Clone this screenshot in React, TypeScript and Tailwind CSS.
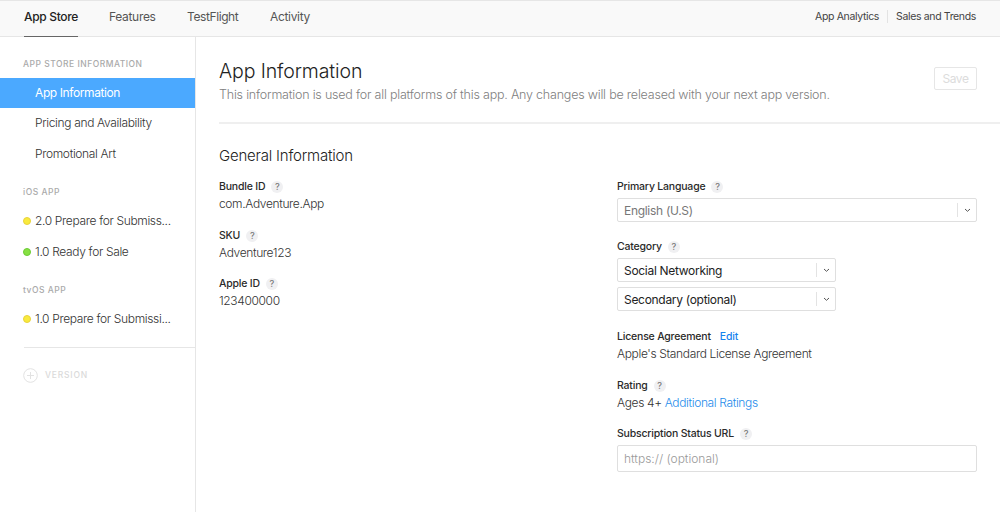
import type { ReactNode } from "react";

export default function App() {
  return (
    <div className="flex h-[512px] w-[1000px] flex-col overflow-hidden bg-white font-['Inter','Liberation_Sans',sans-serif] text-[#444]">
      <header className="flex h-[37px] shrink-0 justify-between border-t border-b border-[#e6e6e6] bg-[#f9f9f9] pr-6 pl-6">
        <nav className="flex text-[12px] leading-[32px] tracking-[-0.32px] text-[#555]">
          <a className="mr-[31px] h-[36px] w-[54px] border-b border-[#666] font-medium whitespace-nowrap text-[#222]">
            App Store
          </a>
          <a className="w-[78px]">Features</a>
          <a className="w-[83px] tracking-[-0.4px]">TestFlight</a>
          <a>Activity</a>
        </nav>
        <div className="flex h-[31px] items-center text-[10.5px] tracking-[-0.35px] text-[#444]">
          <a>App Analytics</a>
          <span className="mr-[8px] ml-[8px] h-[13px] w-px bg-[#e3e3e3]" />
          <a>Sales and Trends</a>
        </div>
      </header>

      <div className="flex min-h-0 flex-1">
        <aside className="w-[196px] shrink-0 border-r border-[#e6e6e6] pt-[19px]">
          <SectionTitle>APP STORE INFORMATION</SectionTitle>
          <div className="mt-[5px]">
            <div className="h-[30px] bg-[#4ba9ff] pl-[35px] text-[12px] leading-[30px] tracking-[-0.4px] text-white">
              App Information
            </div>
            <NavItem>Pricing and Availability</NavItem>
            <NavItem>Promotional Art</NavItem>
          </div>

          <div className="mt-[15px]">
            <SectionTitle>iOS APP</SectionTitle>
          </div>
          <div className="mt-[5px]">
            <NavItem dot="yellow">2.0 Prepare for Submiss...</NavItem>
            <NavItem dot="green">1.0 Ready for Sale</NavItem>
          </div>

          <div className="mt-[15px]">
            <SectionTitle>tvOS APP</SectionTitle>
          </div>
          <div className="mt-[5px]">
            <NavItem dot="yellow">1.0 Prepare for Submissi...</NavItem>
          </div>

          <div className="mt-[12px] ml-6 flex items-center border-t border-[#e6e6e6] pt-[20px]">
            <svg
              className="-ml-px"
              width="15"
              height="15"
              viewBox="0 0 15 15"
              fill="none"
              stroke="#e2e2e2"
            >
              <circle cx="7.5" cy="7.5" r="6.8" />
              <path d="M7.5 4v7M4 7.5h7" />
            </svg>
            <span className="ml-[7px] text-[8.5px] font-medium tracking-[0.8px] text-[#dadada]">
              VERSION
            </span>
          </div>
        </aside>

        <main className="flex-1 pl-[23px]">
          <div className="flex h-[87px] justify-between border-b-2 border-[#efefef] pr-[23px]">
            <div className="pt-[20px]">
              <h1 className="text-[19.5px] leading-[28px] font-light tracking-[-0.1px] text-[#222]">
                App Information
              </h1>
              <p className="text-[12.5px] leading-[19px] font-light tracking-[-0.21px] text-[#808080]">
                This information is used for all platforms of this app. Any
                changes will be released with your next app version.
              </p>
            </div>
            <button className="mt-[30px] h-[23px] w-[43px] rounded-[2px] border border-[#e6e6e6] text-[12px] leading-[21px] tracking-[-0.4px] text-[#dcdcdc]">
              Save
            </button>
          </div>

          <h2 className="mt-[22px] text-[15px] leading-[20px] font-light tracking-[-0.2px] text-[#222]">
            General Information
          </h2>

          <div className="mt-[12px] flex">
            <div className="w-[398px]">
              <Field label="Bundle ID">com.Adventure.App</Field>
              <Field label="SKU">Adventure123</Field>
              <Field label="Apple ID">123400000</Field>
            </div>

            <div className="w-[360px]">
              <Label>Primary Language</Label>
              <div className="mt-[2px] leading-[16px] text-[#777]">
                <Select>English (U.S)</Select>
              </div>

              <div className="mt-[16px]">
                <Label>Category</Label>
              </div>
              <div className="mt-[2px] flex w-[219px] flex-col gap-[5px] text-[#222]">
                <Select>Social Networking</Select>
                <Select>Secondary (optional)</Select>
              </div>

              <div className="mt-[17px]">
                <Field
                  label="License Agreement"
                  action={<a className="ml-[9px] text-[#1583ee]">Edit</a>}
                >
                  Apple's Standard License Agreement
                </Field>
                <Field label="Rating">
                  Ages 4+ <a className="text-[#1f8ceb]">Additional Ratings</a>
                </Field>
              </div>
              <Label>Subscription Status URL</Label>
              <input
                className="mt-[2px] block h-[27px] w-full rounded-[2px] border border-[#dfdfdf] px-[6px] text-[12px] font-light placeholder:text-[#999]"
                placeholder="https:// (optional)"
              />
            </div>
          </div>
        </main>
      </div>
    </div>
  );
}

function SectionTitle({ children }: { children: ReactNode }) {
  return (
    <h3 className="pl-[23px] text-[8.5px] leading-[17px] font-medium tracking-[0.5px] text-[#aaa]">
      {children}
    </h3>
  );
}

function NavItem({
  dot,
  children,
}: {
  dot?: "yellow" | "green";
  children: ReactNode;
}) {
  return (
    <div className="flex h-[30.5px] items-center pl-[23px] text-[12px] font-light tracking-[-0.34px] whitespace-nowrap text-[#333]">
      <span className="flex w-[12px] shrink-0">
        {dot === "yellow" && (
          <i className="size-[8px] rounded-full border border-[#e8d33c] bg-[#f9ea3d]" />
        )}
        {dot === "green" && (
          <i className="size-[8px] rounded-full border border-[#6ccb35] bg-[#87e043]" />
        )}
      </span>
      {children}
    </div>
  );
}

function Label({
  children,
  action,
}: {
  children: ReactNode;
  action?: ReactNode;
}) {
  return (
    <div className="flex h-[18px] items-center text-[10.5px] font-medium tracking-[-0.2px] text-[#2a2a2a]">
      {children}
      {action ?? (
        <span className="ml-[6px] flex size-[12px] items-center justify-center rounded-full bg-[#f0f0f2] text-[9px] text-[#777]">
          ?
        </span>
      )}
    </div>
  );
}

function Field({
  label,
  action,
  children,
}: {
  label: string;
  action?: ReactNode;
  children: ReactNode;
}) {
  return (
    <div className="h-[48.5px]">
      <Label action={action}>{label}</Label>
      <div className="text-[12px] leading-[16px] font-light tracking-[-0.36px] text-[#333]">
        {children}
      </div>
    </div>
  );
}

function Select({ children }: { children: ReactNode }) {
  return (
    <div className="flex h-[24px] w-full items-center justify-between rounded-[2px] border border-[#dfdfdf] pl-[6px] text-[12px] tracking-[-0.3px]">
      <span className="pt-px">{children}</span>
      <span className="flex h-[14px] w-[19px] items-center justify-center border-l border-[#e3e3e3]">
        <svg width="7" height="5" viewBox="0 0 7 5" fill="none" stroke="#555">
          <path d="M1 1l2.5 2.3L6 1" />
        </svg>
      </span>
    </div>
  );
}
